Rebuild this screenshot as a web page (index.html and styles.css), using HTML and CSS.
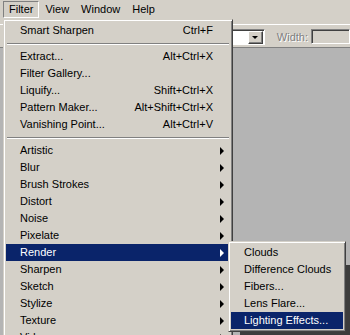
FILE: index.html
```html
<!DOCTYPE html>
<html lang="en">
<head>
  <meta charset="UTF-8" />
  <title>Filter menu</title>
  <link rel="stylesheet" href="styles.css">
</head>
<body>
  <div class="app">
    <div class="menubar">
      <span class="open">Filter</span>
      <span>View</span>
      <span>Window</span>
      <span>Help</span>
    </div>

    <div class="options">
      <div class="select"><span class="drop"></span></div>
      <span class="label">Width:</span>
      <div class="field"></div>
    </div>

    <div class="workspace">
      <div class="doc"></div>
    </div>

    <div class="menu main">
      <div class="item">Smart Sharpen<span class="key">Ctrl+F</span></div>
      <div class="sep"></div>
      <div class="item">Extract...<span class="key">Alt+Ctrl+X</span></div>
      <div class="item">Filter Gallery...</div>
      <div class="item">Liquify...<span class="key">Shift+Ctrl+X</span></div>
      <div class="item">Pattern Maker...<span class="key">Alt+Shift+Ctrl+X</span></div>
      <div class="item">Vanishing Point...<span class="key">Alt+Ctrl+V</span></div>
      <div class="sep"></div>
      <div class="item sub">Artistic<span class="arrow"></span></div>
      <div class="item sub">Blur<span class="arrow"></span></div>
      <div class="item sub">Brush Strokes<span class="arrow"></span></div>
      <div class="item sub">Distort<span class="arrow"></span></div>
      <div class="item sub">Noise<span class="arrow"></span></div>
      <div class="item sub">Pixelate<span class="arrow"></span></div>
      <div class="item sub active">Render<span class="arrow"></span></div>
      <div class="item sub">Sharpen<span class="arrow"></span></div>
      <div class="item sub">Sketch<span class="arrow"></span></div>
      <div class="item sub">Stylize<span class="arrow"></span></div>
      <div class="item sub">Texture<span class="arrow"></span></div>
      <div class="item sub">Video<span class="arrow"></span></div>
      <div class="item sub">Other<span class="arrow"></span></div>
    </div>

    <div class="menu submenu">
      <div class="item">Clouds</div>
      <div class="item">Difference Clouds</div>
      <div class="item">Fibers...</div>
      <div class="item">Lens Flare...</div>
      <div class="item active">Lighting Effects...</div>
    </div>
  </div>
</body>
</html>
```

FILE: styles.css
```css
body {
  margin: 0;
  background: #d4d0c8;
  font-family: "Liberation Sans", Arial, sans-serif;
  font-size: 11px;
  color: #000;
}
.app {
  position: relative;
  width: 350px;
  height: 335px;
  overflow: hidden;
  display: flex;
  flex-direction: column;
}

/* menu bar */
.menubar {
  display: flex;
  height: 19px;
  padding: 1px 0 0 3px;
  box-sizing: border-box;
}
.menubar span {
  padding: 0 6px;
  height: 17px;
  line-height: 17px;
}
.menubar .open {
  border: 1px solid;
  border-color: #808080 #fff #fff #808080;
  padding: 0 5px;
  height: 15px;
  line-height: 15px;
}

/* options bar */
.options {
  height: 23px;
  margin-top: 5px;
  display: flex;
  align-items: center;
  padding: 1px 0 0 180px;
  box-sizing: border-box;
  border-top: 1px solid #fff;
}
.select {
  width: 87px;
  height: 16px;
  box-sizing: border-box;
  background: #fff;
  border: 1px solid;
  border-color: #808080 #fff #fff #808080;
  box-shadow: inset 1px 1px #404040;
  display: flex;
  justify-content: flex-end;
  padding: 1px 1px 0 0;
}
.drop {
  width: 15px;
  height: 13px;
  box-sizing: border-box;
  background: #d4d0c8;
  border: 1px solid;
  border-color: #fff #404040 #404040 #fff;
  box-shadow: inset -1px -1px #808080;
  display: flex;
  align-items: center;
  justify-content: center;
}
.drop::after {
  content: "";
  border-top: 3px solid #000;
  border-left: 3px solid transparent;
  border-right: 3px solid transparent;
  margin-top: 1px;
}
.label {
  margin-left: 12px;
  color: #808080;
  text-shadow: 1px 1px #fff;
}
.field {
  margin-left: 3px;
  width: 40px;
  height: 15px;
  box-sizing: border-box;
  border: 1px solid;
  border-color: #808080 #fff #fff #808080;
  box-shadow: inset 1px 1px #404040;
}

/* workspace */
.workspace {
  flex: 1;
  background: #b4b4b4;
  border-top: 1px solid #808080;
  display: flex;
  padding: 217px 0 0 240px;
}
.doc {
  flex: 1;
  background: #3c3c3c;
}

/* menus */
.menu {
  position: absolute;
  background: #d4d0c8;
  border: 1px solid;
  border-color: #d4d0c8 #404040 #404040 #d4d0c8;
  box-shadow: inset 1px 1px #fff, inset -1px -1px #808080;
  padding: 2px;
  box-sizing: border-box;
}
.main {
  left: 3px;
  top: 19px;
  width: 230px;
}
.submenu {
  left: 228px;
  top: 241px;
  width: 118px;
}
.item {
  display: flex;
  align-items: center;
  height: 17px;
  line-height: 17px;
  padding: 0 17px 0 14px;
  white-space: nowrap;
}
.submenu .item {
  padding-left: 13px;
}
.item.sub {
  padding-right: 6px;
}
.key,
.arrow {
  margin-left: auto;
}
.arrow {
  width: 0;
  height: 0;
  border-left: 4px solid #000;
  border-top: 4px solid transparent;
  border-bottom: 4px solid transparent;
}
.item.active {
  background: #0a246a;
  color: #fff;
}
.item.active .arrow {
  border-left-color: #fff;
}
.sep {
  height: 1px;
  background: #808080;
  border-bottom: 1px solid #fff;
  margin: 4px 1px 3px;
}
```
